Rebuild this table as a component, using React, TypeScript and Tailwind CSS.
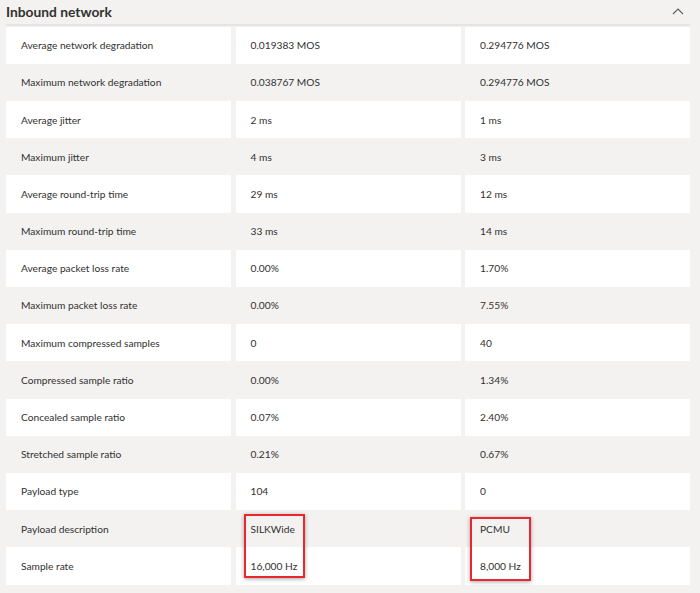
import React from "react";

const rows: [string, string, string][] = [
  ["Average network degradation", "0.019383 MOS", "0.294776 MOS"],
  ["Maximum network degradation", "0.038767 MOS", "0.294776 MOS"],
  ["Average jitter", "2 ms", "1 ms"],
  ["Maximum jitter", "4 ms", "3 ms"],
  ["Average round-trip time", "29 ms", "12 ms"],
  ["Maximum round-trip time", "33 ms", "14 ms"],
  ["Average packet loss rate", "0.00%", "1.70%"],
  ["Maximum packet loss rate", "0.00%", "7.55%"],
  ["Maximum compressed samples", "0", "40"],
  ["Compressed sample ratio", "0.00%", "1.34%"],
  ["Concealed sample ratio", "0.07%", "2.40%"],
  ["Stretched sample ratio", "0.21%", "0.67%"],
  ["Payload type", "104", "0"],
  ["Payload description", "SILKWide", "PCMU"],
  ["Sample rate", "16,000 Hz", "8,000 Hz"],
];

export default function App() {
  return (
    <div
      className="w-[700px] h-[593px] bg-[#f3f2f1] overflow-hidden text-[#323130]"
      style={{ fontFamily: 'Lato, "Open Sans", Arial, sans-serif' }}
    >
      <div className="h-[24px] flex items-center justify-between pl-[6px] pr-[16px]">
        <div className="text-[13.8px] font-bold leading-none">Inbound network</div>
        <svg width="12" height="7" viewBox="0 0 12 7" className="mt-[-1px]">
          <path d="M1 6 L6 1 L11 6" fill="none" stroke="#605e5c" strokeWidth="1.1" />
        </svg>
      </div>
      <div className="ml-[6px] w-[684px] h-[2px] bg-[#e6e4e2]" />
      <div className="relative ml-[6px] w-[684px] pt-[0.7px]">
        <div className="grid grid-cols-3 gap-x-[4.5px]">
          {rows.map((r, i) =>
            r.map((c, j) => (
              <div
                key={`${i}-${j}`}
                className={`h-[37.2px] flex items-center pl-[15px] pt-[1px] text-[10.2px] ${
                  i % 2 === 0 ? "bg-white" : ""
                }`}
              >
                {c}
              </div>
            ))
          )}
        </div>
        <div className="absolute left-[237.5px] top-[488px] w-[61px] h-[64px] border-2 border-[#e8282e] shadow-[0_1px_4px_rgba(0,0,0,0.35)]" />
        <div className="absolute left-[464px] top-[490.5px] w-[61px] h-[64px] border-2 border-[#e8282e] shadow-[0_1px_4px_rgba(0,0,0,0.35)]" />
      </div>
    </div>
  );
}
